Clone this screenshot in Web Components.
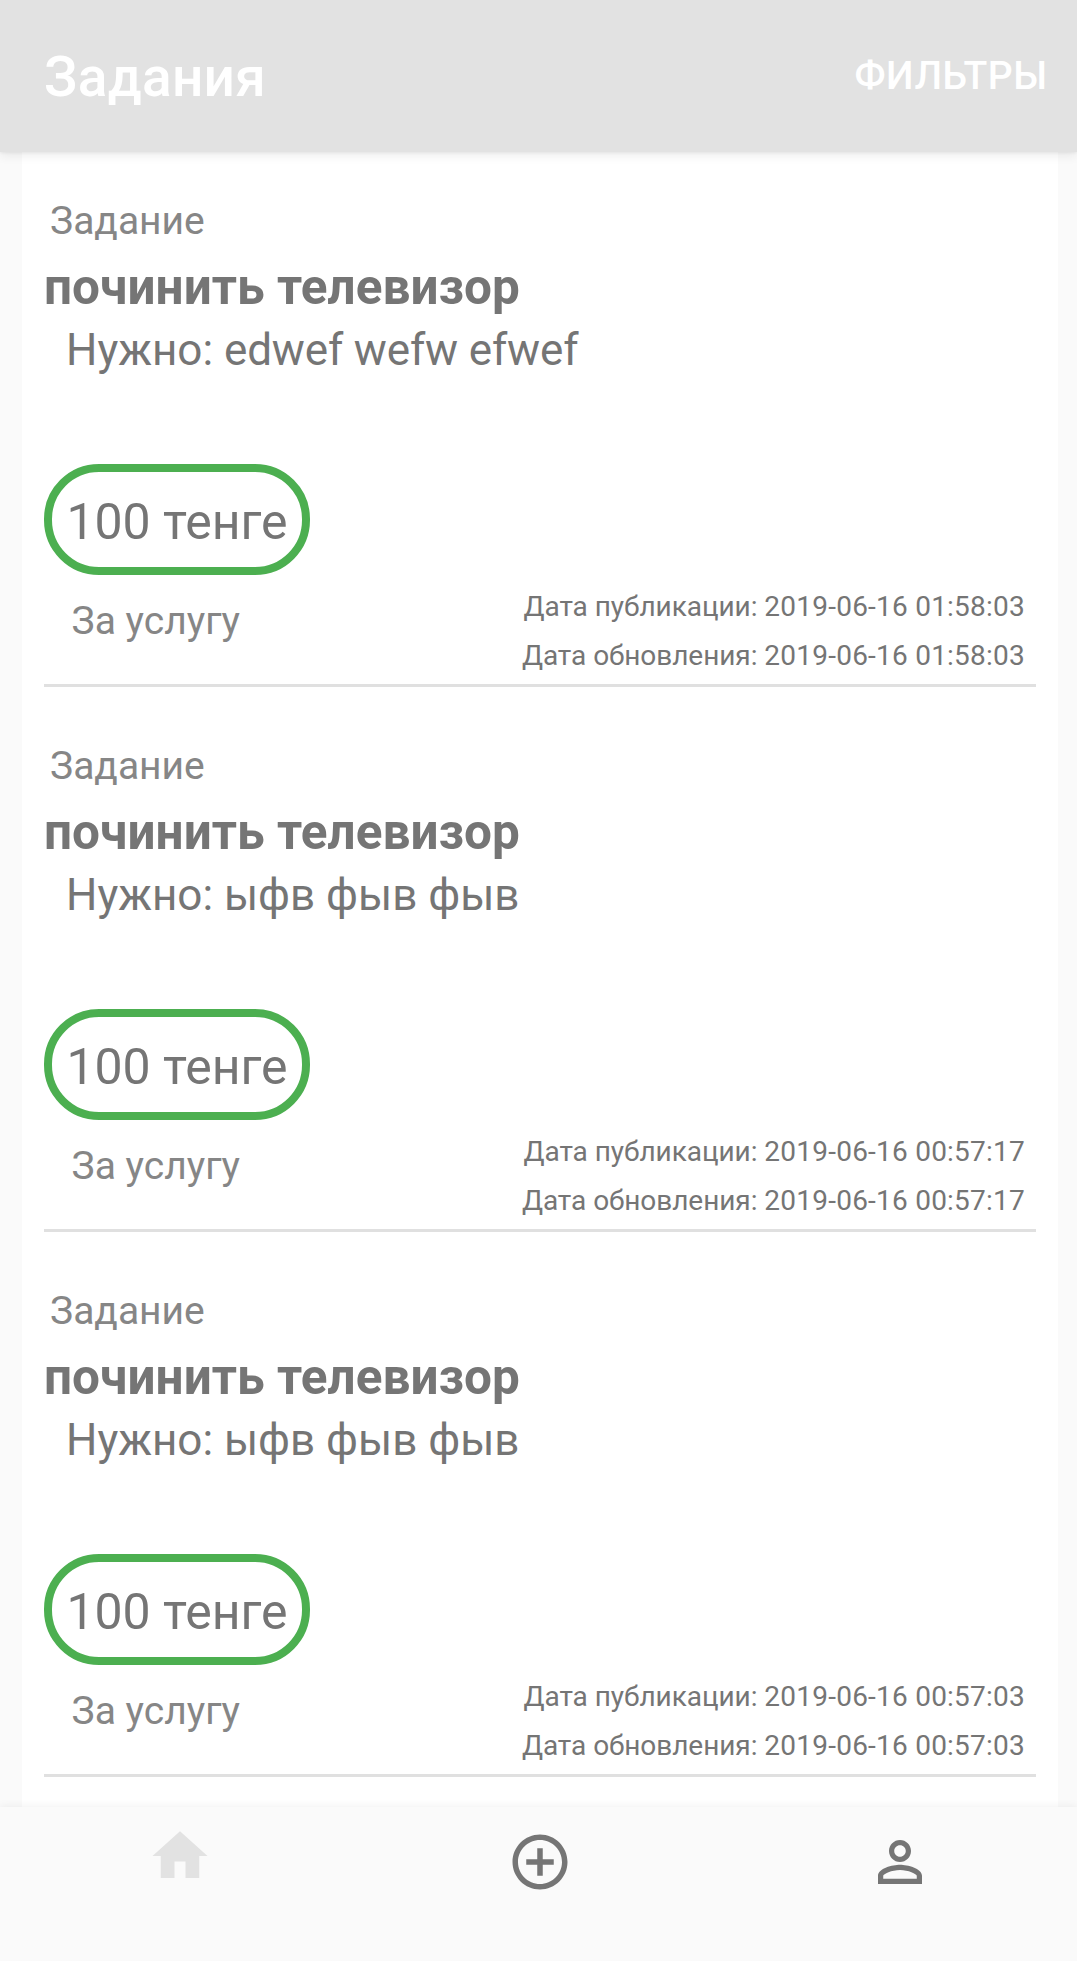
<!DOCTYPE html>
<html lang="ru">
<head>
<meta charset="utf-8">
<title>Задания</title>
<style>
  html, body { margin: 0; height: 100%; }
  body { font-family: Roboto, "Liberation Sans", sans-serif; background: #fafafa; overflow: hidden; }
  .latin { letter-spacing: -.15px; }
</style>
</head>
<body>
<task-screen>
  <app-bar slot="top">Задания<span slot="action">ФИЛЬТРЫ</span></app-bar>
  <task-card published="2019-06-16 01:58:03" updated="2019-06-16 01:58:03">
    <span slot="title">починить телевизор</span>Нужно: <span class="latin">edwef wefw efwef</span><span slot="price">100 тенге</span>
  </task-card>
  <task-card published="2019-06-16 00:57:17" updated="2019-06-16 00:57:17">
    <span slot="title">починить телевизор</span>Нужно: ыфв фыв фыв<span slot="price">100 тенге</span>
  </task-card>
  <task-card published="2019-06-16 00:57:03" updated="2019-06-16 00:57:03">
    <span slot="title">починить телевизор</span>Нужно: ыфв фыв фыв<span slot="price">100 тенге</span>
  </task-card>
  <bottom-nav slot="bottom"></bottom-nav>
</task-screen>

<template id="screen-t">
  <style>
    :host { display: flex; flex-direction: column; height: 1961px; width: 1077px; background: #fafafa; }
    main { flex: 1; min-height: 0; overflow: hidden; display: flex; }
    .list { flex: 1; margin: -10px 19px 0 22px; padding: 0 22px; background: #fff; }
  </style>
  <slot name="top"></slot>
  <main><div class="list"><slot></slot></div></main>
  <slot name="bottom"></slot>
</template>

<template id="bar-t">
  <style>
    :host { display: flex; justify-content: space-between; box-sizing: border-box; height: 152px; padding: 0 29.5px 0 44px;
      background: #e2e2e2; color: #fff; font-weight: 500; position: relative; z-index: 1;
      box-shadow: 0 1px 3px rgba(0,0,0,.06), 0 4px 10px rgba(0,0,0,.07); }
    .title { font-size: 55px; line-height: 64px; margin-top: 45px; letter-spacing: .3px; }
    .action { font-size: 39px; line-height: 46px; margin-top: 53px; letter-spacing: .5px; }
  </style>
  <div class="title"><slot></slot></div>
  <div class="action"><slot name="action"></slot></div>
</template>

<template id="card-t">
  <style>
    :host { display: flex; flex-direction: column; align-items: flex-start; box-sizing: border-box; height: 545px;
      padding-top: 56px; border-bottom: 3px solid #e0e0e0; color: #757575; white-space: nowrap; }
    .kind { font-size: 39px; line-height: 46px; margin-left: 6px; color: #868686; }
    .title { font-size: 49.5px; line-height: 58px; font-weight: 700; margin-top: 14px; letter-spacing: .05px; }
    .need { font-size: 44px; line-height: 52px; margin: 8px 0 0 22px; white-space: normal; }
    .price { box-sizing: border-box; height: 111px; width: 266px; margin-top: 88px; border: 8px solid #4caf50;
      border-radius: 55px; display: flex; justify-content: center; font-size: 50px; line-height: 58px; padding-top: 21px; }
    .foot { align-self: stretch; display: flex; justify-content: space-between; padding: 0 11px 0 27.5px; }
    .unit { font-size: 39px; line-height: 46px; margin-top: 23px; color: #868686; }
    .dates { display: flex; flex-direction: column; gap: 16px; align-items: flex-end; margin-top: 15px;
      font-size: 28px; line-height: 33px; letter-spacing: -.05px; }
    .dates span { letter-spacing: .23px; }
  </style>
  <div class="kind">Задание</div>
  <div class="title"><slot name="title"></slot></div>
  <div class="need"><slot></slot></div>
  <div class="price"><slot name="price"></slot></div>
  <div class="foot">
    <div class="unit">За услугу</div>
    <div class="dates">
      <div>Дата публикации: <span class="pub"></span></div>
      <div>Дата обновления: <span class="upd"></span></div>
    </div>
  </div>
</template>

<template id="nav-t">
  <style>
    :host { display: grid; grid-template-columns: 360px 360px 360px; box-sizing: border-box; height: 154px; background: #fafafa;
      position: relative; z-index: 1; color: #757575; box-shadow: 0 -1px 8px rgba(0,0,0,.06); }
    svg { width: 66px; height: 66px; fill: currentColor; justify-self: center; margin-top: 22px; }
    .on { color: #e2e2e2; margin-top: 16px; }
  </style>
  <svg class="on" viewBox="0 0 24 24"><path d="M10 20v-6h4v6h5v-8h3L12 3 2 12h3v8z"/></svg>
  <svg viewBox="0 0 24 24"><path d="M13 7h-2v4H7v2h4v4h2v-4h4v-2h-4V7zm-1-5C6.48 2 2 6.48 2 12s4.48 10 10 10 10-4.48 10-10S17.52 2 12 2zm0 18c-4.41 0-8-3.59-8-8s3.59-8 8-8 8 3.59 8 8-3.59 8-8 8z"/></svg>
  <svg viewBox="0 0 24 24"><path d="M12 5.9c1.16 0 2.1.94 2.1 2.1s-.94 2.1-2.1 2.1S9.9 9.16 9.9 8s.94-2.1 2.1-2.1m0 9c2.97 0 6.1 1.46 6.1 2.1v1.1H5.9V17c0-.64 3.13-2.1 6.1-2.1M12 4C9.79 4 8 5.79 8 8s1.79 4 4 4 4-1.79 4-4-1.79-4-4-4zm0 9c-2.67 0-8 1.34-8 4v3h16v-3c0-2.66-5.33-4-8-4z"/></svg>
</template>

<script>
  class Base extends HTMLElement {
    constructor() {
      super();
      this.attachShadow({ mode: "open" })
        .append(document.getElementById(this.constructor.tpl).content.cloneNode(true));
    }
  }
  class TaskScreen extends Base { static tpl = "screen-t"; }
  class AppBar extends Base { static tpl = "bar-t"; }
  class BottomNav extends Base { static tpl = "nav-t"; }
  class TaskCard extends Base {
    static tpl = "card-t";
    connectedCallback() {
      this.shadowRoot.querySelector(".pub").textContent = this.getAttribute("published");
      this.shadowRoot.querySelector(".upd").textContent = this.getAttribute("updated");
    }
  }
  customElements.define("task-screen", TaskScreen);
  customElements.define("app-bar", AppBar);
  customElements.define("task-card", TaskCard);
  customElements.define("bottom-nav", BottomNav);
</script>
</body>
</html>
